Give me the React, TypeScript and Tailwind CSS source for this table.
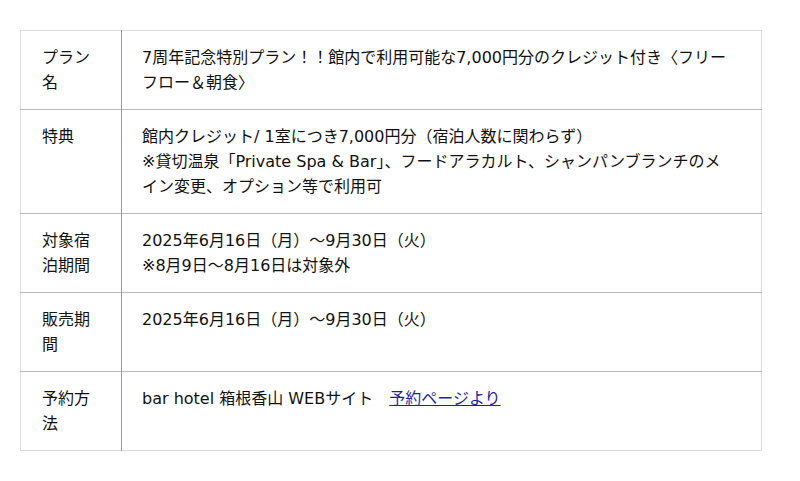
import React from "react";

const rows: { label: string; content: React.ReactNode }[] = [
  {
    label: "プラン名",
    content: "7周年記念特別プラン！！館内で利用可能な7,000円分のクレジット付き〈フリーフロー＆朝食〉",
  },
  {
    label: "特典",
    content: (
      <>
        館内クレジット/ 1室につき7,000円分（宿泊人数に関わらず）
        <br />
        ※貸切温泉「Private Spa &amp; Bar」、フードアラカルト、シャンパンブランチのメイン変更、オプション等で利用可
      </>
    ),
  },
  {
    label: "対象宿泊期間",
    content: (
      <>
        2025年6月16日（月）〜9月30日（火）
        <br />
        ※8月9日〜8月16日は対象外
      </>
    ),
  },
  { label: "販売期間", content: "2025年6月16日（月）〜9月30日（火）" },
  {
    label: "予約方法",
    content: (
      <>
        {"bar hotel 箱根香山 WEBサイト\u3000"}
        <a href="#" className="text-[#1f1fa8] underline">
          予約ページより
        </a>
      </>
    ),
  },
];

export default function App() {
  return (
    <div
      className="w-[800px] h-[481px] bg-white pt-[30px] pl-[20px]"
      style={{ fontFamily: '"DejaVu Sans", "Noto Sans CJK JP", sans-serif' }}
    >
      <table className="w-[742px] border-collapse border border-[#dddddd] text-[16px] leading-[25px] text-[#111]">
        <tbody>
          {rows.map((r, i) => (
            <tr key={i} className="border-t border-[#bbbbbb] first:border-t-[#dddddd]">
              <td className="w-[101px] align-top border-r border-[#999999] pl-[21px] pr-[21px] pt-[14px] pb-[14px]">
                {r.label}
              </td>
              <td className="align-top pl-[20px] pr-[26px] pt-[14px] pb-[14px]">{r.content}</td>
            </tr>
          ))}
        </tbody>
      </table>
    </div>
  );
}
